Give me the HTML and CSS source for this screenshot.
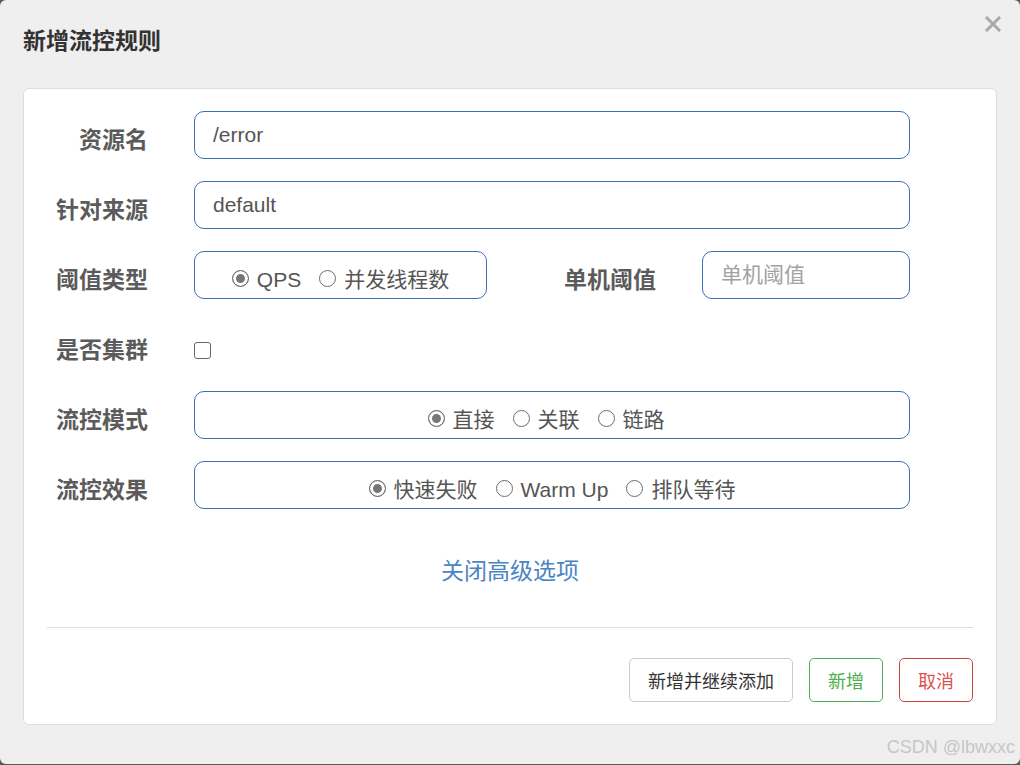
FILE: index.html
```html
<!DOCTYPE html>
<html lang="zh-CN">
<head>
    <meta charset="UTF-8">
    <meta name="viewport" content="width=device-width, initial-scale=1.0">
    <title>新增流控规则</title>
    <link rel="stylesheet" href="styles.css">
</head>
<body>
    <div class="modal">
        <div class="modal-header">
            <h4 class="modal-title">新增流控规则</h4>
            <button class="close" type="button" aria-label="关闭">
                <svg width="16" height="16" viewBox="0 0 16 16"><path d="M2 2 L14 14 M14 2 L2 14" stroke="#a9a9a9" stroke-width="3" stroke-linecap="square"/></svg>
            </button>
        </div>

        <div class="modal-body">
            <form class="rule-form">
                <div class="form-row">
                    <label class="row-label">资源名</label>
                    <input class="text-input" type="text" value="/error">
                </div>
                <div class="form-row">
                    <label class="row-label">针对来源</label>
                    <input class="text-input" type="text" value="default">
                </div>
                <div class="form-row">
                    <label class="row-label">阈值类型</label>
                    <div class="radio-box box-narrow">
                        <label class="radio-item"><input type="radio" name="grade" checked>QPS</label>
                        <label class="radio-item"><input type="radio" name="grade">并发线程数</label>
                    </div>
                    <label class="row-label label-mid">单机阈值</label>
                    <input class="text-input" type="text" placeholder="单机阈值">
                </div>
                <div class="form-row">
                    <label class="row-label">是否集群</label>
                    <input class="check" type="checkbox">
                </div>
                <div class="form-row">
                    <label class="row-label">流控模式</label>
                    <div class="radio-box box-shift">
                        <label class="radio-item"><input type="radio" name="strategy" checked>直接</label>
                        <label class="radio-item"><input type="radio" name="strategy">关联</label>
                        <label class="radio-item"><input type="radio" name="strategy">链路</label>
                    </div>
                </div>
                <div class="form-row">
                    <label class="row-label">流控效果</label>
                    <div class="radio-box">
                        <label class="radio-item"><input type="radio" name="behavior" checked>快速失败</label>
                        <label class="radio-item"><input type="radio" name="behavior">Warm Up</label>
                        <label class="radio-item"><input type="radio" name="behavior">排队等待</label>
                    </div>
                </div>
            </form>

            <div class="toggle-link"><a href="#">关闭高级选项</a></div>

            <hr class="divider">

            <div class="modal-footer">
                <button class="btn btn-default" type="button">新增并继续添加</button>
                <button class="btn btn-success" type="button">新增</button>
                <button class="btn btn-danger" type="button">取消</button>
            </div>
        </div>

        <div class="watermark">CSDN @lbwxxc</div>
    </div>
</body>
</html>
```

FILE: styles.css
```css
body { margin: 0; background: #5a5a5a; font-family: "Liberation Sans", "Noto Sans CJK SC", sans-serif; }

.modal { position: relative; height: 764px; box-sizing: border-box; padding: 0 23px; background: #efefef; border-radius: 6px; overflow: hidden; }

.modal-header { height: 88px; box-sizing: border-box; padding-top: 24px; }
.modal-title { margin: 0; font-size: 23px; line-height: 34px; font-weight: bold; color: #333; }
.close { position: absolute; top: 16px; right: 19px; width: 16px; height: 16px; padding: 0; border: none; background: none; cursor: pointer; }
.close svg { display: block; }

.modal-body { height: 637px; box-sizing: border-box; padding-top: 22px; background: #fff; border: 1px solid #ddd; border-radius: 6px; }

.rule-form { margin: 0; }
.form-row { display: flex; align-items: center; height: 48px; margin-bottom: 22px; padding-right: 86px; }
.form-row:last-child { margin-bottom: 0; }
.row-label { flex: none; width: 124px; margin-right: 46px; padding-top: 10px; text-align: right; font-size: 23px; line-height: 30px; font-weight: bold; color: #5b5b5b; }
.label-mid { width: 169px; }

.text-input { flex: 1; min-width: 0; height: 48px; box-sizing: border-box; padding: 0 18px; font-family: inherit; font-size: 21px; color: #555; border: 1px solid #3c70b5; border-radius: 10px; outline: none; }
.text-input::placeholder { color: #a2a2a2; font-size: 21px; }

.radio-box { flex: 1; display: flex; justify-content: center; align-items: center; gap: 18px; height: 48px; box-sizing: border-box; padding-top: 10px; border: 1px solid #3c70b5; border-radius: 10px; }
.box-narrow { flex: none; width: 293px; }
.box-shift { padding-right: 12px; }
.radio-item { display: flex; align-items: center; gap: 8px; font-size: 21px; line-height: 28px; color: #555; }
.radio-item input { appearance: none; width: 17px; height: 17px; margin: 0 0 4px; border: 1px solid #6b6b6b; border-radius: 50%; background: #fff; }
.radio-item input:checked { background: #767676; box-shadow: inset 0 0 0 3px #fff; }

.check { appearance: none; width: 17px; height: 17px; margin: 10px 0 0; border: 1.5px solid #666; border-radius: 3px; background: #fff; }

.toggle-link { margin-top: 46px; text-align: center; line-height: 32px; }
.toggle-link a { font-size: 23px; color: #4a84c4; text-decoration: none; }

.divider { margin: 37px 23px 0; border: none; border-top: 1px solid #ddd; }

.modal-footer { display: flex; justify-content: flex-end; gap: 16px; margin-top: 30px; padding-right: 23px; }
.btn { height: 44px; padding: 0 18px; font-family: inherit; font-size: 18px; background: #fff; border: 1px solid #ccc; border-radius: 5px; cursor: pointer; }
.btn-default { color: #333; }
.btn-success { color: #4cae4c; border-color: #4cae4c; }
.btn-danger { color: #d9534f; border-color: #d43f3a; }

.watermark { position: absolute; right: 5px; bottom: 6px; font-size: 18px; color: #c6c6c6; }
```
